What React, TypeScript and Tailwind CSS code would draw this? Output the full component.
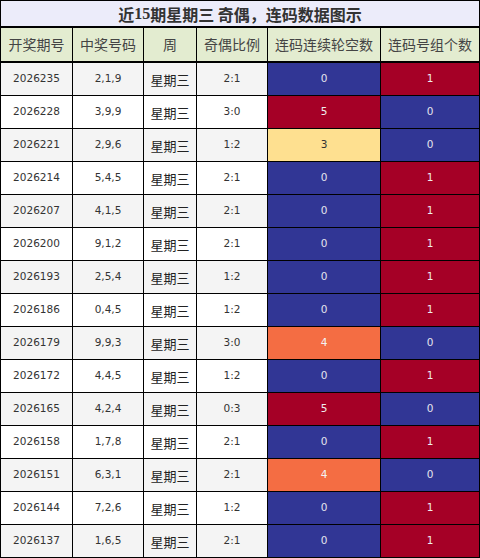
const rows = [
  ["2026235", "2,1,9", "2:1", 0, 1],
  ["2026228", "3,9,9", "3:0", 5, 0],
  ["2026221", "2,9,6", "1:2", 3, 0],
  ["2026214", "5,4,5", "2:1", 0, 1],
  ["2026207", "4,1,5", "2:1", 0, 1],
  ["2026200", "9,1,2", "2:1", 0, 1],
  ["2026193", "2,5,4", "1:2", 0, 1],
  ["2026186", "0,4,5", "1:2", 0, 1],
  ["2026179", "9,9,3", "3:0", 4, 0],
  ["2026172", "4,4,5", "1:2", 0, 1],
  ["2026165", "4,2,4", "0:3", 5, 0],
  ["2026158", "1,7,8", "2:1", 0, 1],
  ["2026151", "6,3,1", "2:1", 4, 0],
  ["2026144", "7,2,6", "1:2", 0, 1],
  ["2026137", "1,6,5", "2:1", 0, 1],
] as const

const gapColor: Record<number, string> = {
  0: "bg-[#313695] text-[#e4e4ee]",
  3: "bg-[#fee090] text-[#333333]",
  4: "bg-[#f46d43] text-[#f3f3f3]",
  5: "bg-[#a50026] text-[#eeeeee]",
}

const cols = "grid grid-cols-[71px_70px_52px_70px_112px_98px] gap-px"
const num = "font-['DejaVu_Sans',sans-serif] text-[10.5px]"
const cjk = "font-['Noto_Sans_CJK_SC',sans-serif]"

function App() {
  return (
    <div className="w-[480px] h-[558px] bg-white">
      <div className="w-[480px] bg-black p-px flex flex-col gap-px">
        <div className={`h-[25px] mb-px bg-[#ececfa] flex items-center justify-center font-bold text-[16px] text-[#333] ${cjk}`}>
          近<span className="font-['Liberation_Serif',serif]">15</span>期星期三 奇偶，连码数据图示
        </div>
        <div className={`${cols} h-[33px] mb-px`}>
          {["开奖期号", "中奖号码", "周", "奇偶比例", "连码连续轮空数", "连码号组个数"].map((h) => (
            <div key={h} className={`bg-[#e3ecd0] flex items-center justify-center text-[14px] text-[#444] ${cjk}`}>{h}</div>
          ))}
        </div>
        {rows.map((r, i) => {
          const bg = i % 2 === 0 ? "bg-[#f4f4f4]" : "bg-white"
          return (
            <div key={r[0]} className={`${cols} h-[32px]`}>
              <div className={`${bg} ${num} text-[#333] flex items-center justify-center`}>{r[0]}</div>
              <div className={`${bg} ${num} text-[#333] flex items-center justify-center`}>{r[1]}</div>
              <div className={`${bg} ${cjk} text-[13px] text-[#222] flex items-center justify-center pt-[2px]`}>星期三</div>
              <div className={`${bg} ${num} text-[#333] flex items-center justify-center`}>{r[2]}</div>
              <div className={`${gapColor[r[3]]} ${num} flex items-center justify-center`}>{r[3]}</div>
              <div className={`${r[4] === 1 ? "bg-[#a50026] text-[#eeeeee]" : "bg-[#313695] text-[#e4e4ee]"} ${num} flex items-center justify-center`}>{r[4]}</div>
            </div>
          )
        })}
      </div>
    </div>
  )
}

export default App
